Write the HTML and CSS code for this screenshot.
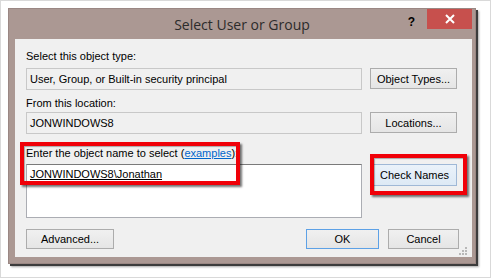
FILE: index.html
```html
<!DOCTYPE html>
<html>
<head>
  <title>Select User or Group</title>
  <link rel="stylesheet" href="styles.css">
</head>
<body>
  <div class="page">
    <div class="dialog">
      <div class="titlebar">
        <span></span>
        <div class="title">Select User or Group</div>
        <div class="controls">
          <span class="help">?</span>
          <span class="close">
            <svg width="10" height="10" viewBox="0 0 10 10"><path d="M1 1L9 9M9 1L1 9" stroke="#fff" stroke-width="2"/></svg>
          </span>
        </div>
      </div>

      <div class="client">
        <div class="label first">Select this object type:</div>
        <div class="row">
          <div class="field readonly">User, Group, or Built-in security principal</div>
          <button class="btn">Object Types...</button>
        </div>

        <div class="label second">From this location:</div>
        <div class="row">
          <div class="field readonly">JONWINDOWS8</div>
          <button class="btn">Locations...</button>
        </div>

        <div class="label third">Enter the object name to select (<a href="#">examples</a>):</div>
        <div class="row tall">
          <div class="field names"><u>JONWINDOWS8\Jonathan</u></div>
          <button class="btn hover">Check Names</button>
        </div>

        <div class="actions">
          <button class="btn advanced">Advanced...</button>
          <div class="right">
            <button class="btn default ok">OK</button>
            <button class="btn cancel">Cancel</button>
          </div>
        </div>

        <!-- annotations drawn over the dialog -->
        <div class="mark mark-name"></div>
        <div class="mark mark-check"></div>

        <svg class="grip" width="8" height="8" viewBox="0 0 8 8">
          <rect x="6" y="0" width="2" height="2" fill="#b8b8b8"/>
          <rect x="3" y="3" width="2" height="2" fill="#b8b8b8"/>
          <rect x="6" y="3" width="2" height="2" fill="#b8b8b8"/>
          <rect x="0" y="6" width="2" height="2" fill="#b8b8b8"/>
          <rect x="3" y="6" width="2" height="2" fill="#b8b8b8"/>
          <rect x="6" y="6" width="2" height="2" fill="#b8b8b8"/>
        </svg>
      </div>
    </div>
  </div>
</body>
</html>
```

FILE: styles.css
```css
* {
  box-sizing: border-box;
}

body {
  margin: 0;
  background: #fff;
  font-family: "Liberation Sans", Arial, sans-serif;
  font-size: 11px;
  color: #000;
}

.page {
  width: 491px;
  height: 278px;
  border: 1px solid #d9d9d9;
  padding: 7px;
  background: #fff;
}

.dialog {
  width: 468px;
  height: 256px;
  background: #ab9893;
  border: 1px solid #9a8783;
  box-shadow: 2px 2px 0 #3c3c3c, 3px 3px 2px rgba(0, 0, 0, 0.35);
  display: flex;
  flex-direction: column;
}

.titlebar {
  height: 30px;
  display: grid;
  grid-template-columns: 1fr auto 1fr;
}

.title {
  font-family: "Open Sans", sans-serif;
  font-size: 14px;
  color: #2b2b2b;
  padding-top: 6px;
}

.controls {
  display: flex;
  justify-content: flex-end;
  align-items: flex-start;
  padding-right: 3px;
}

.help {
  font-weight: bold;
  font-size: 12px;
  margin-top: 6px;
  margin-right: 12px;
}

.close {
  width: 45px;
  height: 20px;
  background: #c7504d;
  display: flex;
  align-items: center;
  justify-content: center;
}

.client {
  position: relative;
  flex: 1;
  margin: 0 3px 6px 6px;
  background: #f0f0f0;
  padding: 10px 13px 0 11px;
}

.label {
  line-height: 15px;
  height: 15px;
}

.label a {
  color: #0066cc;
}

.second {
  margin-top: 6px;
}

.third {
  margin-top: 12px;
}

.row {
  display: flex;
  align-items: flex-start;
  gap: 8px;
  margin-top: 4px;
}

.second + .row {
  margin-top: 1px;
}

.third + .row {
  margin-top: 3px;
}

.field {
  width: 336px;
  height: 22px;
  border: 1px solid #c8c8c8;
  padding: 0 3px;
  line-height: 20px;
  white-space: nowrap;
}

.readonly {
  background: #f0f0f0;
}

.names {
  height: 54px;
  background: #fff;
  border-color: #abadb3;
  border-top-color: #7a7a7a;
  line-height: 18px;
}

.btn {
  height: 21px;
  width: 87px;
  padding: 0;
  font-family: inherit;
  font-size: 11px;
  color: #000;
  background: linear-gradient(#f0f0f0, #e5e5e5);
  border: 1px solid #acacac;
}

.hover {
  height: 22px;
  margin-left: 2px;
  width: 85px;
  background: linear-gradient(#eaf2fa, #dde9f5);
  border-color: #9fb8d6;
}

.actions {
  display: flex;
  justify-content: space-between;
  margin-top: 11px;
}

.actions .btn {
  height: 20px;
}

.advanced {
  width: 88px;
}

.right {
  display: flex;
  gap: 9px;
}

.ok {
  width: 73px;
}

.cancel {
  width: 71px;
}

.default {
  border-color: #5da1e6;
}

.mark {
  position: absolute;
  border: 4px solid #f00008;
  box-shadow: 2px 2px 2px rgba(0, 0, 0, 0.55), inset 1px 1px 1px rgba(0, 0, 0, 0.3);
}

.mark-name {
  left: 5px;
  top: 103px;
  width: 220px;
  height: 43px;
}

.mark-check {
  left: 355px;
  top: 115px;
  width: 97px;
  height: 41px;
}

.grip {
  position: absolute;
  right: 5px;
  bottom: 2px;
}
```
